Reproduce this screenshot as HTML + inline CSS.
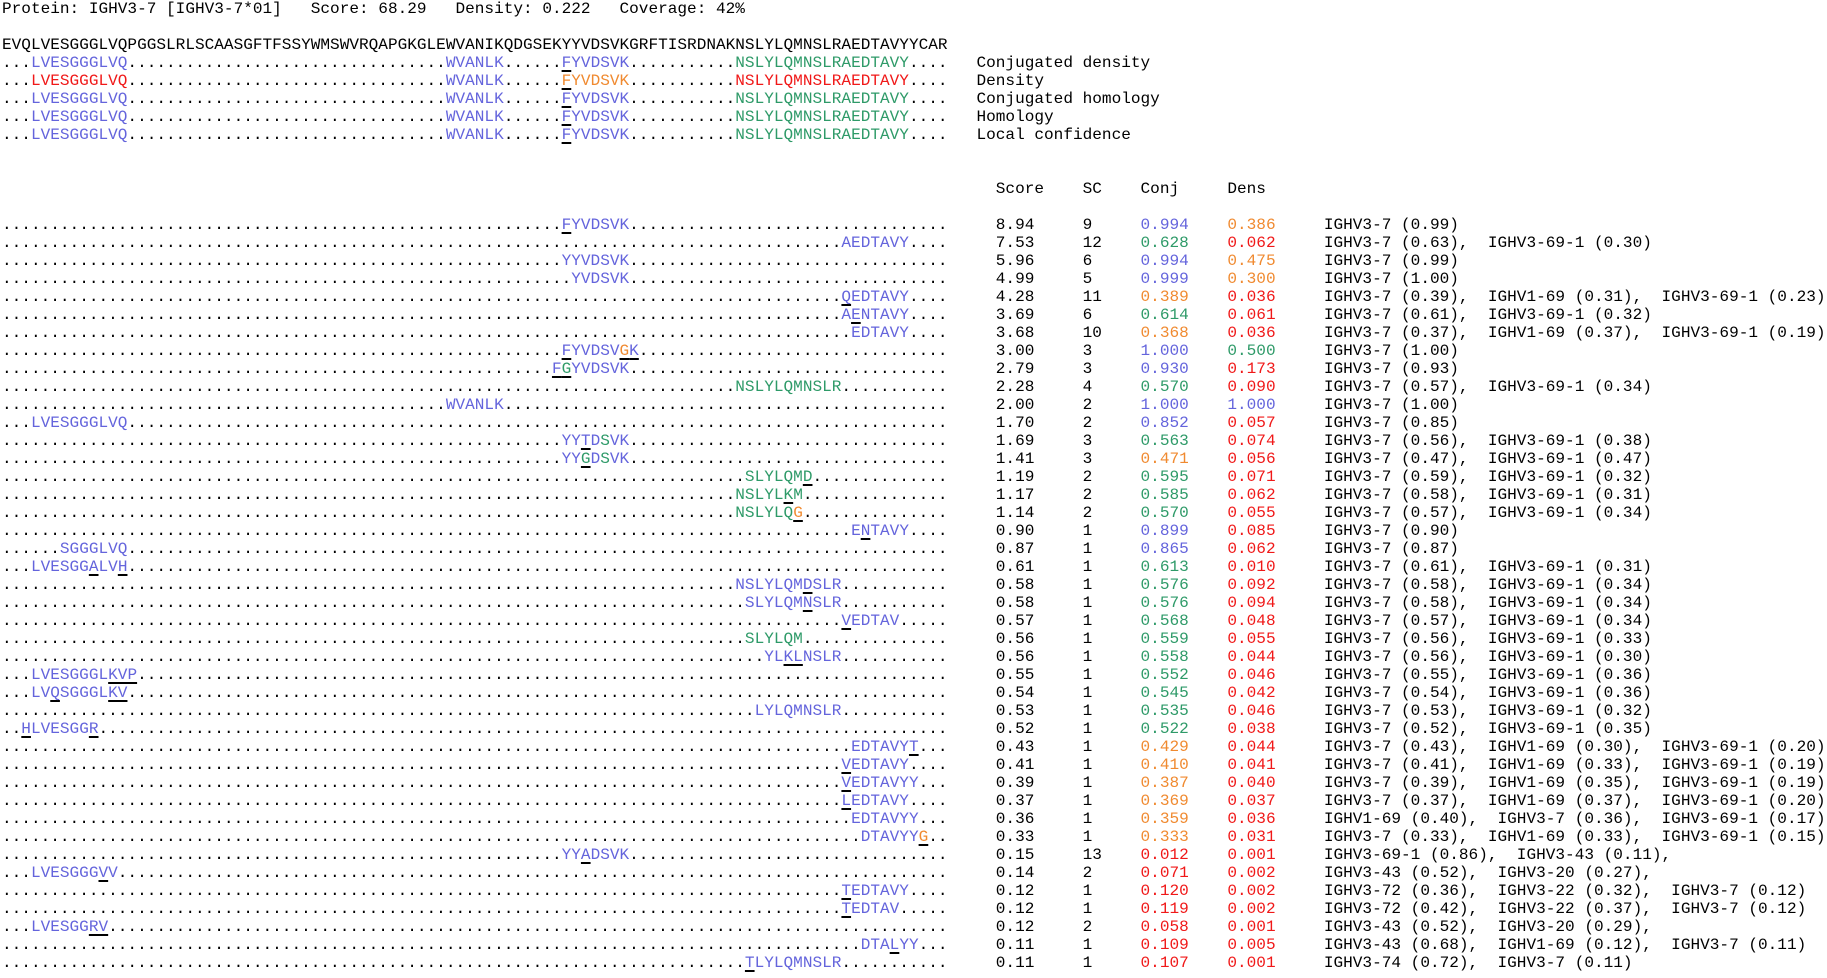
<!DOCTYPE html>
<html><head><meta charset="utf-8"><style>
html,body{margin:0;padding:0;background:#fff;width:1827px;height:978px;overflow:hidden}
body{font-family:"Liberation Mono","DejaVu Sans Mono",monospace;font-size:16.08px;color:#000;position:relative}
.r{position:absolute;left:2px;height:18px;line-height:18px;white-space:pre;width:1820px;margin-top:1px}
b{position:absolute;top:0;background:#fff;font-weight:normal;color:#6464dc}
i{position:absolute;top:0;font-style:normal}
u{text-decoration:underline;text-decoration-color:#000;text-decoration-thickness:2px;text-underline-offset:3px}
.g{color:#2e9a68}.o{color:#f08a30}.rd{color:#f01818}.bl{color:#6464dc}.k{color:#000}
</style></head><body>
<div class="r" style="top:-1px">Protein: IGHV3-7 [IGHV3-7*01]   Score: 68.29   Density: 0.222   Coverage: 42%</div>
<div class="r" style="top:35px">EVQLVESGGGLVQPGGSLRLSCAASGFTFSSYWMSWVRQAPGKGLEWVANIKQDGSEKYYVDSVKGRFTISRDNAKNSLYLQMNSLRAEDTAVYYCAR</div>

<div class="r" style="top:53px">..................................................................................................<b style="left:3ch">LVESGGGLVQ</b><b style="left:46ch">WVANLK</b><b style="left:58ch"><u>F</u>YVDSVK</b><b class="g" style="left:76ch">NSLYLQMNSLRAEDTAVY</b><i style="left:101ch">Conjugated density</i></div>
<div class="r" style="top:71px">..................................................................................................<b class="rd" style="left:3ch">LVESGGGLVQ</b><b style="left:46ch">WVANLK</b><b class="o" style="left:58ch"><u>F</u>YVDSVK</b><b class="rd" style="left:76ch">NSLYLQMNSLRAEDTAVY</b><i style="left:101ch">Density</i></div>
<div class="r" style="top:89px">..................................................................................................<b style="left:3ch">LVESGGGLVQ</b><b style="left:46ch">WVANLK</b><b style="left:58ch"><u>F</u>YVDSVK</b><b class="g" style="left:76ch">NSLYLQMNSLRAEDTAVY</b><i style="left:101ch">Conjugated homology</i></div>
<div class="r" style="top:107px">..................................................................................................<b style="left:3ch">LVESGGGLVQ</b><b style="left:46ch">WVANLK</b><b style="left:58ch"><u>F</u>YVDSVK</b><b class="g" style="left:76ch">NSLYLQMNSLRAEDTAVY</b><i style="left:101ch">Homology</i></div>
<div class="r" style="top:125px">..................................................................................................<b style="left:3ch">LVESGGGLVQ</b><b style="left:46ch">WVANLK</b><b style="left:58ch"><u>F</u>YVDSVK</b><b class="g" style="left:76ch">NSLYLQMNSLRAEDTAVY</b><i style="left:101ch">Local confidence</i></div>

<div class="r" style="top:179px"><i style="left:103ch">Score</i><i style="left:112ch">SC</i><i style="left:118ch">Conj</i><i style="left:127ch">Dens</i></div>

<div class="r" style="top:215px">..................................................................................................<b style="left:58ch"><u>F</u>YVDSVK</b><i style="left:103ch">8.94</i><i style="left:112ch">9</i><i class="bl" style="left:118ch">0.994</i><i class="o" style="left:127ch">0.386</i><i style="left:137ch">IGHV3-7 (0.99)</i></div>
<div class="r" style="top:233px">..................................................................................................<b style="left:87ch">AEDTAVY</b><i style="left:103ch">7.53</i><i style="left:112ch">12</i><i class="g" style="left:118ch">0.628</i><i class="rd" style="left:127ch">0.062</i><i style="left:137ch">IGHV3-7 (0.63),  IGHV3-69-1 (0.30)</i></div>
<div class="r" style="top:251px">..................................................................................................<b style="left:58ch">YYVDSVK</b><i style="left:103ch">5.96</i><i style="left:112ch">6</i><i class="bl" style="left:118ch">0.994</i><i class="o" style="left:127ch">0.475</i><i style="left:137ch">IGHV3-7 (0.99)</i></div>
<div class="r" style="top:269px">..................................................................................................<b style="left:59ch">YVDSVK</b><i style="left:103ch">4.99</i><i style="left:112ch">5</i><i class="bl" style="left:118ch">0.999</i><i class="o" style="left:127ch">0.300</i><i style="left:137ch">IGHV3-7 (1.00)</i></div>
<div class="r" style="top:287px">..................................................................................................<b style="left:87ch"><u>Q</u>EDTAVY</b><i style="left:103ch">4.28</i><i style="left:112ch">11</i><i class="o" style="left:118ch">0.389</i><i class="rd" style="left:127ch">0.036</i><i style="left:137ch">IGHV3-7 (0.39),  IGHV1-69 (0.31),  IGHV3-69-1 (0.23)</i></div>
<div class="r" style="top:305px">..................................................................................................<b style="left:87ch">A<u>E</u>NTAVY</b><i style="left:103ch">3.69</i><i style="left:112ch">6</i><i class="g" style="left:118ch">0.614</i><i class="rd" style="left:127ch">0.061</i><i style="left:137ch">IGHV3-7 (0.61),  IGHV3-69-1 (0.32)</i></div>
<div class="r" style="top:323px">..................................................................................................<b style="left:88ch">EDTAVY</b><i style="left:103ch">3.68</i><i style="left:112ch">10</i><i class="o" style="left:118ch">0.368</i><i class="rd" style="left:127ch">0.036</i><i style="left:137ch">IGHV3-7 (0.37),  IGHV1-69 (0.37),  IGHV3-69-1 (0.19)</i></div>
<div class="r" style="top:341px">..................................................................................................<b style="left:58ch"><u>F</u>YVDSV<u class="o">G</u><u>K</u></b><i style="left:103ch">3.00</i><i style="left:112ch">3</i><i class="bl" style="left:118ch">1.000</i><i class="g" style="left:127ch">0.500</i><i style="left:137ch">IGHV3-7 (1.00)</i></div>
<div class="r" style="top:359px">..................................................................................................<b style="left:57ch"><u>F<span class="g">G</span></u>YVDSVK</b><i style="left:103ch">2.79</i><i style="left:112ch">3</i><i class="bl" style="left:118ch">0.930</i><i class="rd" style="left:127ch">0.173</i><i style="left:137ch">IGHV3-7 (0.93)</i></div>
<div class="r" style="top:377px">..................................................................................................<b class="g" style="left:76ch">NSLYLQMNSLR</b><i style="left:103ch">2.28</i><i style="left:112ch">4</i><i class="g" style="left:118ch">0.570</i><i class="rd" style="left:127ch">0.090</i><i style="left:137ch">IGHV3-7 (0.57),  IGHV3-69-1 (0.34)</i></div>
<div class="r" style="top:395px">..................................................................................................<b style="left:46ch">WVANLK</b><i style="left:103ch">2.00</i><i style="left:112ch">2</i><i class="bl" style="left:118ch">1.000</i><i class="bl" style="left:127ch">1.000</i><i style="left:137ch">IGHV3-7 (1.00)</i></div>
<div class="r" style="top:413px">..................................................................................................<b style="left:3ch">LVESGGGLVQ</b><i style="left:103ch">1.70</i><i style="left:112ch">2</i><i class="bl" style="left:118ch">0.852</i><i class="rd" style="left:127ch">0.057</i><i style="left:137ch">IGHV3-7 (0.85)</i></div>
<div class="r" style="top:431px">..................................................................................................<b style="left:58ch">YY<u>T</u>D<span class="g">S</span>VK</b><i style="left:103ch">1.69</i><i style="left:112ch">3</i><i class="g" style="left:118ch">0.563</i><i class="rd" style="left:127ch">0.074</i><i style="left:137ch">IGHV3-7 (0.56),  IGHV3-69-1 (0.38)</i></div>
<div class="r" style="top:449px">..................................................................................................<b style="left:58ch">YY<u class="g">G</u>D<span class="g">S</span>VK</b><i style="left:103ch">1.41</i><i style="left:112ch">3</i><i class="o" style="left:118ch">0.471</i><i class="rd" style="left:127ch">0.056</i><i style="left:137ch">IGHV3-7 (0.47),  IGHV3-69-1 (0.47)</i></div>
<div class="r" style="top:467px">..................................................................................................<b class="g" style="left:77ch">SLYLQM<u>D</u></b><i style="left:103ch">1.19</i><i style="left:112ch">2</i><i class="g" style="left:118ch">0.595</i><i class="rd" style="left:127ch">0.071</i><i style="left:137ch">IGHV3-7 (0.59),  IGHV3-69-1 (0.32)</i></div>
<div class="r" style="top:485px">..................................................................................................<b class="g" style="left:76ch">NSLYL<u>K</u>M</b><i style="left:103ch">1.17</i><i style="left:112ch">2</i><i class="g" style="left:118ch">0.585</i><i class="rd" style="left:127ch">0.062</i><i style="left:137ch">IGHV3-7 (0.58),  IGHV3-69-1 (0.31)</i></div>
<div class="r" style="top:503px">..................................................................................................<b class="g" style="left:76ch">NSLYLQ<u class="o">G</u></b><i style="left:103ch">1.14</i><i style="left:112ch">2</i><i class="g" style="left:118ch">0.570</i><i class="rd" style="left:127ch">0.055</i><i style="left:137ch">IGHV3-7 (0.57),  IGHV3-69-1 (0.34)</i></div>
<div class="r" style="top:521px">..................................................................................................<b style="left:88ch">E<u>N</u>TAVY</b><i style="left:103ch">0.90</i><i style="left:112ch">1</i><i class="bl" style="left:118ch">0.899</i><i class="rd" style="left:127ch">0.085</i><i style="left:137ch">IGHV3-7 (0.90)</i></div>
<div class="r" style="top:539px">..................................................................................................<b style="left:6ch">SGGGLVQ</b><i style="left:103ch">0.87</i><i style="left:112ch">1</i><i class="bl" style="left:118ch">0.865</i><i class="rd" style="left:127ch">0.062</i><i style="left:137ch">IGHV3-7 (0.87)</i></div>
<div class="r" style="top:557px">..................................................................................................<b style="left:3ch">LVESGG<u>A</u>LV<u>H</u></b><i style="left:103ch">0.61</i><i style="left:112ch">1</i><i class="g" style="left:118ch">0.613</i><i class="rd" style="left:127ch">0.010</i><i style="left:137ch">IGHV3-7 (0.61),  IGHV3-69-1 (0.31)</i></div>
<div class="r" style="top:575px">..................................................................................................<b style="left:76ch">NSLYLQM<u>D</u>SLR</b><i style="left:103ch">0.58</i><i style="left:112ch">1</i><i class="g" style="left:118ch">0.576</i><i class="rd" style="left:127ch">0.092</i><i style="left:137ch">IGHV3-7 (0.58),  IGHV3-69-1 (0.34)</i></div>
<div class="r" style="top:593px">..................................................................................................<b style="left:77ch">SLYLQM<u>N</u>SLR</b><i style="left:103ch">0.58</i><i style="left:112ch">1</i><i class="g" style="left:118ch">0.576</i><i class="rd" style="left:127ch">0.094</i><i style="left:137ch">IGHV3-7 (0.58),  IGHV3-69-1 (0.34)</i></div>
<div class="r" style="top:611px">..................................................................................................<b style="left:87ch"><u>V</u>EDTAV</b><i style="left:103ch">0.57</i><i style="left:112ch">1</i><i class="g" style="left:118ch">0.568</i><i class="rd" style="left:127ch">0.048</i><i style="left:137ch">IGHV3-7 (0.57),  IGHV3-69-1 (0.34)</i></div>
<div class="r" style="top:629px">..................................................................................................<b class="g" style="left:77ch">SLYLQM</b><i style="left:103ch">0.56</i><i style="left:112ch">1</i><i class="g" style="left:118ch">0.559</i><i class="rd" style="left:127ch">0.055</i><i style="left:137ch">IGHV3-7 (0.56),  IGHV3-69-1 (0.33)</i></div>
<div class="r" style="top:647px">..................................................................................................<b style="left:79ch">YL<u>KL</u>NSLR</b><i style="left:103ch">0.56</i><i style="left:112ch">1</i><i class="g" style="left:118ch">0.558</i><i class="rd" style="left:127ch">0.044</i><i style="left:137ch">IGHV3-7 (0.56),  IGHV3-69-1 (0.30)</i></div>
<div class="r" style="top:665px">..................................................................................................<b style="left:3ch">LVESGGGL<u>KVP</u></b><i style="left:103ch">0.55</i><i style="left:112ch">1</i><i class="g" style="left:118ch">0.552</i><i class="rd" style="left:127ch">0.046</i><i style="left:137ch">IGHV3-7 (0.55),  IGHV3-69-1 (0.36)</i></div>
<div class="r" style="top:683px">..................................................................................................<b style="left:3ch">LV<u>Q</u>SGGGL<u>KV</u></b><i style="left:103ch">0.54</i><i style="left:112ch">1</i><i class="g" style="left:118ch">0.545</i><i class="rd" style="left:127ch">0.042</i><i style="left:137ch">IGHV3-7 (0.54),  IGHV3-69-1 (0.36)</i></div>
<div class="r" style="top:701px">..................................................................................................<b style="left:78ch">LYLQMNSLR</b><i style="left:103ch">0.53</i><i style="left:112ch">1</i><i class="g" style="left:118ch">0.535</i><i class="rd" style="left:127ch">0.046</i><i style="left:137ch">IGHV3-7 (0.53),  IGHV3-69-1 (0.32)</i></div>
<div class="r" style="top:719px">..................................................................................................<b style="left:2ch"><u>H</u>LVESGG<u>R</u></b><i style="left:103ch">0.52</i><i style="left:112ch">1</i><i class="g" style="left:118ch">0.522</i><i class="rd" style="left:127ch">0.038</i><i style="left:137ch">IGHV3-7 (0.52),  IGHV3-69-1 (0.35)</i></div>
<div class="r" style="top:737px">..................................................................................................<b style="left:88ch">EDTAVY<u>T</u></b><i style="left:103ch">0.43</i><i style="left:112ch">1</i><i class="o" style="left:118ch">0.429</i><i class="rd" style="left:127ch">0.044</i><i style="left:137ch">IGHV3-7 (0.43),  IGHV1-69 (0.30),  IGHV3-69-1 (0.20)</i></div>
<div class="r" style="top:755px">..................................................................................................<b style="left:87ch"><u>V</u>EDTAVY</b><i style="left:103ch">0.41</i><i style="left:112ch">1</i><i class="o" style="left:118ch">0.410</i><i class="rd" style="left:127ch">0.041</i><i style="left:137ch">IGHV3-7 (0.41),  IGHV1-69 (0.33),  IGHV3-69-1 (0.19)</i></div>
<div class="r" style="top:773px">..................................................................................................<b style="left:87ch"><u>V</u>EDTAVYY</b><i style="left:103ch">0.39</i><i style="left:112ch">1</i><i class="o" style="left:118ch">0.387</i><i class="rd" style="left:127ch">0.040</i><i style="left:137ch">IGHV3-7 (0.39),  IGHV1-69 (0.35),  IGHV3-69-1 (0.19)</i></div>
<div class="r" style="top:791px">..................................................................................................<b style="left:87ch"><u>L</u>EDTAVY</b><i style="left:103ch">0.37</i><i style="left:112ch">1</i><i class="o" style="left:118ch">0.369</i><i class="rd" style="left:127ch">0.037</i><i style="left:137ch">IGHV3-7 (0.37),  IGHV1-69 (0.37),  IGHV3-69-1 (0.20)</i></div>
<div class="r" style="top:809px">..................................................................................................<b style="left:88ch">EDTAVYY</b><i style="left:103ch">0.36</i><i style="left:112ch">1</i><i class="o" style="left:118ch">0.359</i><i class="rd" style="left:127ch">0.036</i><i style="left:137ch">IGHV1-69 (0.40),  IGHV3-7 (0.36),  IGHV3-69-1 (0.17)</i></div>
<div class="r" style="top:827px">..................................................................................................<b style="left:89ch">DTAVYY<u class="o">G</u></b><i style="left:103ch">0.33</i><i style="left:112ch">1</i><i class="o" style="left:118ch">0.333</i><i class="rd" style="left:127ch">0.031</i><i style="left:137ch">IGHV3-7 (0.33),  IGHV1-69 (0.33),  IGHV3-69-1 (0.15)</i></div>
<div class="r" style="top:845px">..................................................................................................<b style="left:58ch">YY<u>A</u>DSVK</b><i style="left:103ch">0.15</i><i style="left:112ch">13</i><i class="rd" style="left:118ch">0.012</i><i class="rd" style="left:127ch">0.001</i><i style="left:137ch">IGHV3-69-1 (0.86),  IGHV3-43 (0.11),</i></div>
<div class="r" style="top:863px">..................................................................................................<b style="left:3ch">LVESGGG<u>V</u>V</b><i style="left:103ch">0.14</i><i style="left:112ch">2</i><i class="rd" style="left:118ch">0.071</i><i class="rd" style="left:127ch">0.002</i><i style="left:137ch">IGHV3-43 (0.52),  IGHV3-20 (0.27),</i></div>
<div class="r" style="top:881px">..................................................................................................<b style="left:87ch"><u>T</u>EDTAVY</b><i style="left:103ch">0.12</i><i style="left:112ch">1</i><i class="rd" style="left:118ch">0.120</i><i class="rd" style="left:127ch">0.002</i><i style="left:137ch">IGHV3-72 (0.36),  IGHV3-22 (0.32),  IGHV3-7 (0.12)</i></div>
<div class="r" style="top:899px">..................................................................................................<b style="left:87ch"><u>T</u>EDTAV</b><i style="left:103ch">0.12</i><i style="left:112ch">1</i><i class="rd" style="left:118ch">0.119</i><i class="rd" style="left:127ch">0.002</i><i style="left:137ch">IGHV3-72 (0.42),  IGHV3-22 (0.37),  IGHV3-7 (0.12)</i></div>
<div class="r" style="top:917px">..................................................................................................<b style="left:3ch">LVESGG<u>RV</u></b><i style="left:103ch">0.12</i><i style="left:112ch">2</i><i class="rd" style="left:118ch">0.058</i><i class="rd" style="left:127ch">0.001</i><i style="left:137ch">IGHV3-43 (0.52),  IGHV3-20 (0.29),</i></div>
<div class="r" style="top:935px">..................................................................................................<b style="left:89ch">DTA<u>L</u>YY</b><i style="left:103ch">0.11</i><i style="left:112ch">1</i><i class="rd" style="left:118ch">0.109</i><i class="rd" style="left:127ch">0.005</i><i style="left:137ch">IGHV3-43 (0.68),  IGHV1-69 (0.12),  IGHV3-7 (0.11)</i></div>
<div class="r" style="top:953px">..................................................................................................<b style="left:77ch"><u>T</u>LYLQMNSLR</b><i style="left:103ch">0.11</i><i style="left:112ch">1</i><i class="rd" style="left:118ch">0.107</i><i class="rd" style="left:127ch">0.001</i><i style="left:137ch">IGHV3-74 (0.72),  IGHV3-7 (0.11)</i></div>
</body></html>
